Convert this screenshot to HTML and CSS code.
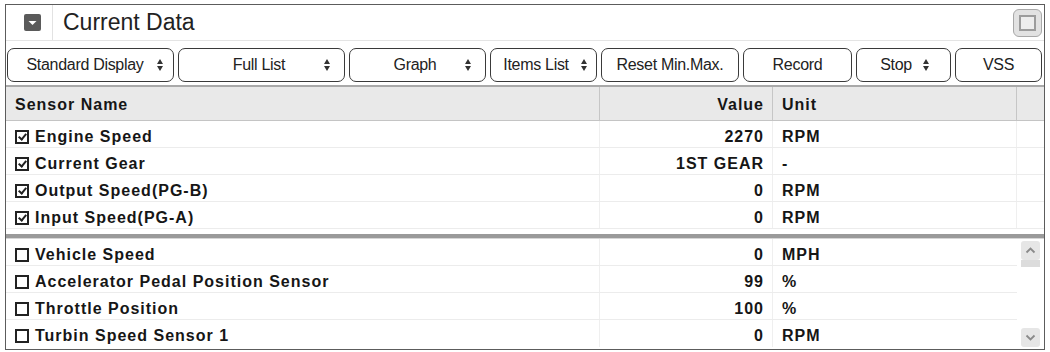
FILE: index.html
```html
<!doctype html>
<html lang="en">
  <head>
    <meta charset="UTF-8" />
    <title>Current Data</title>
    <link rel="stylesheet" href="styles.css">
  </head>
  <body>
    <div class="panel">
      <div class="title-bar">
        <div class="title-icon-cell">
          <svg class="title-icon" width="17" height="17" viewBox="0 0 17 17">
            <rect x="0" y="0" width="17" height="17" rx="2" fill="#5a5a5a" />
            <polygon points="4.5,7 12.5,7 8.5,11" fill="#fff" />
          </svg>
        </div>
        <h1 class="title">Current Data</h1>
        <div class="window-button"><span></span></div>
      </div>

      <div class="toolbar">
        <button class="tool-button w-standard"><span class="label">Standard Display</span><span class="updown"></span></button>
        <button class="tool-button w-full"><span class="label wide">Full List</span><span class="updown"></span></button>
        <button class="tool-button w-graph"><span class="label wide">Graph</span><span class="updown"></span></button>
        <button class="tool-button w-items"><span class="label">Items List</span><span class="updown"></span></button>
        <button class="tool-button w-reset"><span class="label">Reset Min.Max.</span></button>
        <button class="tool-button w-record"><span class="label">Record</span></button>
        <button class="tool-button w-stop"><span class="label">Stop</span><span class="updown gap"></span></button>
        <button class="tool-button w-vss"><span class="label">VSS</span></button>
      </div>

      <div class="pane pane-top">
        <div class="row head">
          <div class="cell name">Sensor Name</div>
          <div class="cell value">Value</div>
          <div class="cell unit">Unit</div>
          <div class="cell end"></div>
        </div>
        <div class="row">
          <div class="cell name"><span class="check on"></span>Engine Speed</div>
          <div class="cell value">2270</div>
          <div class="cell unit">RPM</div>
          <div class="cell end"></div>
        </div>
        <div class="row">
          <div class="cell name"><span class="check on"></span>Current Gear</div>
          <div class="cell value">1ST GEAR</div>
          <div class="cell unit">-</div>
          <div class="cell end"></div>
        </div>
        <div class="row">
          <div class="cell name"><span class="check on"></span>Output Speed(PG-B)</div>
          <div class="cell value">0</div>
          <div class="cell unit">RPM</div>
          <div class="cell end"></div>
        </div>
        <div class="row">
          <div class="cell name"><span class="check on"></span>Input Speed(PG-A)</div>
          <div class="cell value">0</div>
          <div class="cell unit">RPM</div>
          <div class="cell end"></div>
        </div>
      </div>

      <div class="splitter"></div>

      <div class="pane pane-bottom">
        <div class="rows">
          <div class="row">
            <div class="cell name"><span class="check"></span>Vehicle Speed</div>
            <div class="cell value">0</div>
            <div class="cell unit">MPH</div>
          </div>
          <div class="row">
            <div class="cell name"><span class="check"></span>Accelerator Pedal Position Sensor</div>
            <div class="cell value">99</div>
            <div class="cell unit">%</div>
          </div>
          <div class="row">
            <div class="cell name"><span class="check"></span>Throttle Position</div>
            <div class="cell value">100</div>
            <div class="cell unit">%</div>
          </div>
          <div class="row">
            <div class="cell name"><span class="check"></span>Turbin Speed Sensor 1</div>
            <div class="cell value">0</div>
            <div class="cell unit">RPM</div>
          </div>
        </div>
        <div class="scrollbar">
          <div class="scroll-btn">
            <svg width="11" height="7" viewBox="0 0 11 7"><polyline points="1.5,5.5 5.5,1.5 9.5,5.5" fill="none" stroke="#8a8a8a" stroke-width="1.8" /></svg>
          </div>
          <div class="scroll-grip"></div>
          <div class="scroll-track"></div>
          <div class="scroll-btn">
            <svg width="11" height="7" viewBox="0 0 11 7"><polyline points="1.5,1.5 5.5,5.5 9.5,1.5" fill="none" stroke="#8a8a8a" stroke-width="1.8" /></svg>
          </div>
        </div>
      </div>
    </div>
  </body>
</html>
```

FILE: styles.css
```css
body {
  margin: 0;
  padding: 4px 5px;
  font-family: "Liberation Sans", Arial, sans-serif;
  background-color: #fff;
  color: #1a1a1a;
}

.panel {
  width: 1038px;
  height: 344px;
  border: 1px solid #5c5c5c;
  background-color: #fff;
  overflow: hidden;
}

/* title */
.title-bar {
  display: flex;
  align-items: center;
  height: 35px;
  border-bottom: 1px solid #e4e4e4;
}
.title-icon-cell {
  width: 47px;
  height: 100%;
  display: flex;
  align-items: center;
  padding-left: 18px;
  box-sizing: border-box;
  border-right: 1px solid #e2e2e2;
}
.title-icon {
  display: block;
}
.title {
  margin: 0 0 0 10px;
  font-size: 23px;
  font-weight: normal;
  color: #222;
}
.window-button {
  margin-left: auto;
  margin-right: 2px;
  width: 29px;
  height: 28px;
  box-sizing: border-box;
  border: 1px solid #a8a8a8;
  border-radius: 6px;
  background-color: #e2e2e2;
  display: flex;
  justify-content: center;
  align-items: center;
}
.window-button span {
  width: 17px;
  height: 16px;
  box-sizing: border-box;
  border: 2px solid #9c9c9c;
  background-color: #ededed;
}

/* toolbar */
.toolbar {
  display: flex;
  gap: 4px;
  height: 46px;
  padding: 7px 0 0 1px;
  box-sizing: border-box;
  border-bottom: 2px solid #a9a9a9;
}
.tool-button {
  display: flex;
  align-items: center;
  height: 34px;
  padding: 0 8px;
  border: 1px solid #3a3a3a;
  border-radius: 7px;
  background-color: #fff;
  font-family: "Liberation Sans", Arial, sans-serif;
  font-size: 16px;
  letter-spacing: -0.3px;
  color: #222;
  box-sizing: border-box;
}
.tool-button .label {
  flex: 1;
  text-align: center;
  white-space: nowrap;
}
.tool-button .label.wide {
  padding-left: 10px;
}
.updown {
  width: 7px;
  height: 12px;
  margin: 0 5px 0 3px;
  position: relative;
  flex: none;
}
.updown::before,
.updown::after {
  content: "";
  position: absolute;
  left: 0;
  border-left: 3.5px solid transparent;
  border-right: 3.5px solid transparent;
}
.updown::before {
  top: 0;
  border-bottom: 5px solid #333;
}
.updown::after {
  bottom: 0;
  border-top: 5px solid #333;
}
.updown.gap {
  margin-left: 10px;
  margin-right: 12px;
}
.w-standard { width: 167px; padding: 0 4px 0 8px; }
.w-full { width: 167px; }
.w-graph { width: 137px; }
.w-items { width: 107px; padding: 0 3px; }
.w-reset { width: 138px; padding: 0 2px; }
.w-record { width: 109px; }
.w-stop { width: 95px; }
.w-vss { width: 87px; }
.w-stop .label { padding-left: 14px; }

/* table */
.pane-top {
  height: 147px;
}
.row {
  display: grid;
  grid-template-columns: 594px 173px 244px 1fr;
  height: 27px;
  border-bottom: 1px solid #ececec;
  box-sizing: border-box;
  font-size: 16px;
  letter-spacing: 1px;
  font-weight: bold;
  color: #161616;
}
.row.head {
  height: 34px;
  background-color: #e9e9e9;
  border-bottom: 1px solid #c4c4c4;
}
.cell {
  display: flex;
  align-items: center;
  padding-top: 5px;
  border-right: 1px solid #efefef;
  white-space: nowrap;
  overflow: hidden;
}
.head .cell {
  padding-top: 2px;
  border-right-color: #c6c6c6;
}
.cell:last-child {
  border-right: none;
}
.cell.name {
  padding-left: 9px;
}
.cell.value {
  justify-content: flex-end;
  padding-right: 8px;
}
.cell.unit {
  padding-left: 9px;
}
.check {
  width: 14px;
  height: 14px;
  box-sizing: border-box;
  border: 2px solid #222;
  margin-right: 6px;
  position: relative;
  flex: none;
}
.check.on::after {
  content: "";
  position: absolute;
  left: 3px;
  top: 0;
  width: 3px;
  height: 6px;
  border-right: 2px solid #222;
  border-bottom: 2px solid #222;
  transform: rotate(40deg);
}

.splitter {
  height: 4px;
  background-color: #9a9a9a;
  border-bottom: 1px solid #d6d6d6;
}

.pane-bottom {
  display: flex;
}
.pane-bottom .rows {
  width: 1011px;
}
.pane-bottom .row {
  grid-template-columns: 594px 173px 244px;
}
.pane-bottom .row:last-child {
  border-bottom: none;
}
.scrollbar {
  width: 22px;
  margin-left: 2px;
  padding-top: 2px;
  display: flex;
  flex-direction: column;
  align-items: center;
  height: 106px;
}
.scroll-btn {
  width: 19px;
  height: 19px;
  border-radius: 3px;
  background-color: #e6e6e6;
  display: flex;
  justify-content: center;
  align-items: center;
}
.scroll-grip {
  width: 19px;
  height: 7px;
  background-color: #dcdcdc;
}
.scroll-track {
  flex: 1;
}
```
